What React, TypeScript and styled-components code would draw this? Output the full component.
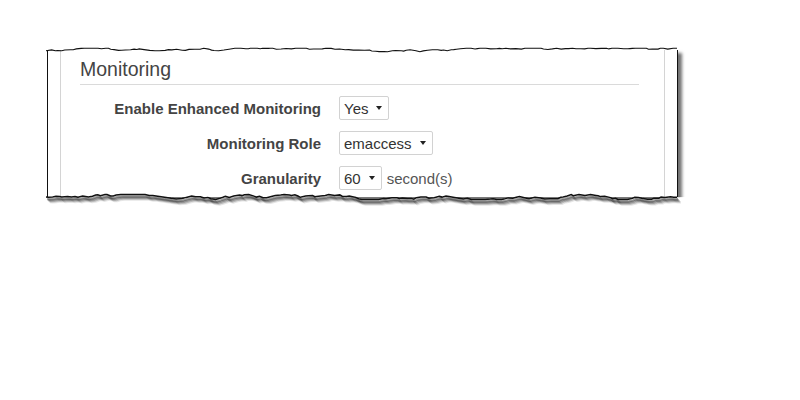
import { Fragment } from "react";
import styled, { createGlobalStyle } from "styled-components";

const GlobalStyle = createGlobalStyle`
  html, body {
    margin: 0;
    padding: 0;
    background: #fff;
    font-family: "Liberation Sans", Arial, sans-serif;
  }
`;

// seeded so the torn edge comes out the same on every render
function tornLine(width: number, seed: number, amp: number, mid: number) {
  let s = seed;
  const rnd = () => {
    s = (s * 9301 + 49297) % 233280;
    return s / 233280;
  };
  const pts: string[] = [];
  let x = 0;
  let y = 0;
  while (x < width) {
    y = Math.max(-amp, Math.min(amp, y + (rnd() - 0.5) * amp * 1.2));
    pts.push(`${x.toFixed(1)},${(mid + y).toFixed(1)}`);
    x += 2 + rnd() * 4;
  }
  pts.push(`${width},${(mid + y).toFixed(1)}`);
  return pts;
}

function TornEdge({ side, width }: { side: "top" | "bottom"; width: number }) {
  const h = 24;
  const mid = 10;
  const full = width + 10;
  const pts = tornLine(width, side === "top" ? 17 : 83, side === "top" ? 1.8 : 2.4, mid);
  const line = "M" + pts.join(" L");
  const cover =
    side === "top"
      ? `M0,0 L${pts.join(" L")} L${full},${mid} L${full},0 Z`
      : `M0,${h} L${pts.join(" L")} L${full},${mid} L${full},${h} Z`;

  return (
    <EdgeSvg $side={side} width={full} height={h} viewBox={`0 0 ${full} ${h}`}>
      <path d={cover} fill="#fff" />
      {side === "bottom" &&
        [5, 4, 3, 2].map((d) => (
          <path
            key={d}
            d={line}
            transform={`translate(${d - 1},${d})`}
            fill="none"
            stroke="#000"
            strokeWidth="2.5"
            opacity={0.1 + (5 - d) * 0.09}
          />
        ))}
      <path d={line} fill="none" stroke="#111" strokeWidth={side === "top" ? 1.1 : 1.5} />
    </EdgeSvg>
  );
}

const EdgeSvg = styled.svg<{ $side: "top" | "bottom" }>`
  position: absolute;
  left: -2px;
  ${({ $side }) => ($side === "top" ? "top: -10px;" : "bottom: -14px;")}
  pointer-events: none;
  overflow: visible;
`;

const Page = styled.div`
  box-sizing: border-box;
  min-height: 400px;
  padding: 50px 0 0 47px;
`;

const Frame = styled.div`
  position: relative;
  box-sizing: border-box;
  width: 631px;
  height: 147px;
  background: #fff;
  border-left: 1.5px solid #111;
  border-right: 1.5px solid #111;
  padding: 0 12px;
  box-shadow: 4px 3px 3px rgba(0, 0, 0, 0.55);
`;

const Panel = styled.section`
  box-sizing: border-box;
  height: 100%;
  border-left: 1px solid #d4d4d4;
  border-right: 1px solid #d4d4d4;
  padding: 8px 25px 0 19px;
`;

const Heading = styled.h2`
  margin: 0;
  padding-bottom: 4px;
  border-bottom: 1px solid #dadada;
  font-size: 19.5px;
  line-height: 22px;
  font-weight: normal;
  color: #444;
`;

const Form = styled.div`
  display: grid;
  grid-template-columns: 241px auto;
  column-gap: 18px;
  row-gap: 11px;
  margin-top: 11px;
  align-items: center;
`;

const Label = styled.label`
  text-align: right;
  font-size: 15px;
  font-weight: bold;
  color: #444;
`;

const Field = styled.div`
  display: flex;
  align-items: center;
  gap: 5px;
`;

const Select = styled.div`
  box-sizing: border-box;
  display: inline-flex;
  align-items: center;
  height: 24px;
  padding: 0 6px 0 4px;
  border: 1px solid #d2d2d2;
  border-radius: 2px;
  background: #fff;
  font-size: 15px;
  color: #333;
`;

const Caret = styled.span`
  margin-left: 8px;
  width: 0;
  height: 0;
  border-left: 3.5px solid transparent;
  border-right: 3.5px solid transparent;
  border-top: 4px solid #222;
`;

const Unit = styled.span`
  font-size: 15px;
  color: #555;
`;

const rows = [
  { label: "Enable Enhanced Monitoring", value: "Yes" },
  { label: "Monitoring Role", value: "emaccess" },
  { label: "Granularity", value: "60", unit: "second(s)" },
];

export default function App() {
  return (
    <>
      <GlobalStyle />
      <Page>
        <Frame>
          <Panel>
            <Heading>Monitoring</Heading>
            <Form>
              {rows.map((r) => (
                <Fragment key={r.label}>
                  <Label>{r.label}</Label>
                  <Field>
                    <Select>
                      {r.value}
                      <Caret />
                    </Select>
                    {r.unit && <Unit>{r.unit}</Unit>}
                  </Field>
                </Fragment>
              ))}
            </Form>
          </Panel>
          <TornEdge side="top" width={631} />
          <TornEdge side="bottom" width={631} />
        </Frame>
      </Page>
    </>
  );
}
